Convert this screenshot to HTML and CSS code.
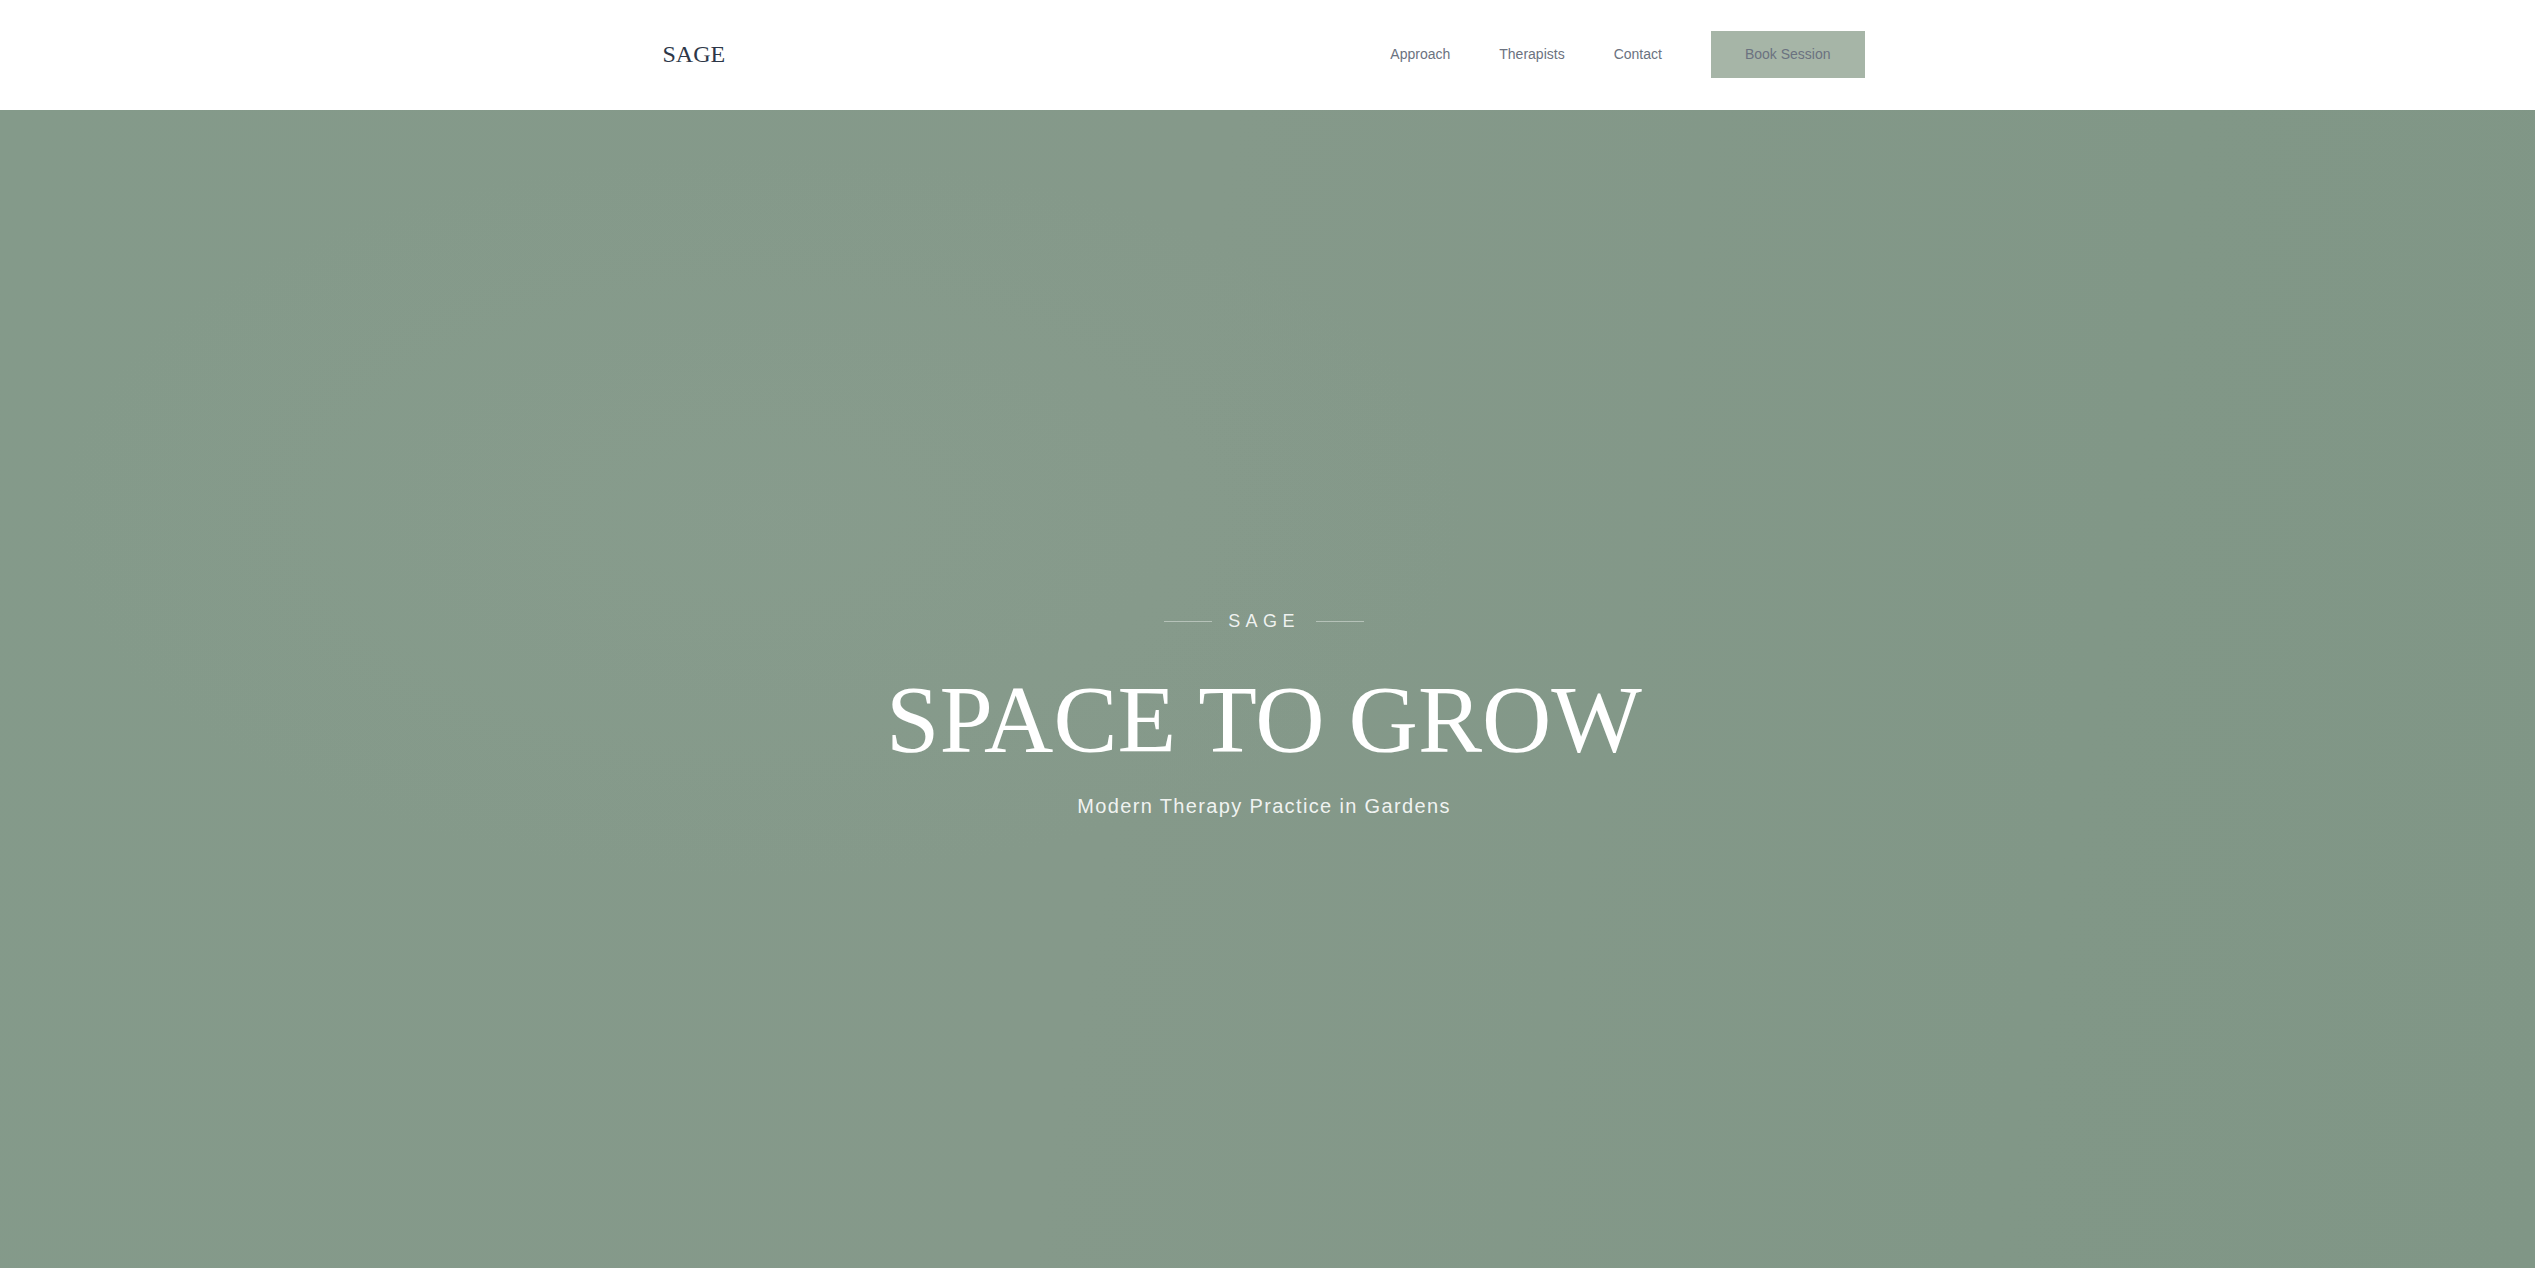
FILE: index.html
```html
<!DOCTYPE html>
<html lang="en">
<head>
<meta charset="utf-8">
<title>Sage — Space to Grow</title>
<link rel="stylesheet" href="styles.css">
</head>
<body>
<header class="site-header">
  <div class="header-inner">
    <a class="logo" href="#">SAGE</a>
    <nav class="nav">
      <a class="nav-link" href="#">Approach</a>
      <a class="nav-link" href="#">Therapists</a>
      <a class="nav-link" href="#">Contact</a>
      <a class="btn-book" href="#">Book Session</a>
    </nav>
  </div>
</header>
<section class="hero">
  <div class="eyebrow">
    <span class="eyebrow-line"></span>
    <span class="eyebrow-text">SAGE</span>
    <span class="eyebrow-line"></span>
  </div>
  <h1 class="hero-title">SPACE TO GROW</h1>
  <p class="hero-sub">Modern Therapy Practice in Gardens</p>
</section>
</body>
</html>
```
FILE: styles.css
```css
* { box-sizing: border-box; }
html, body { margin: 0; padding: 0; }
body {
  font-family: "Liberation Sans", Arial, sans-serif;
  background: #ffffff;
  overflow: hidden;
}
a { text-decoration: none; }

.site-header {
  height: 110px;
  background: #ffffff;
  padding-right: 7px;
  padding-bottom: 2px;
}
.header-inner {
  max-width: 1201px;
  height: 100%;
  margin: 0 auto;
  display: flex;
  align-items: center;
  justify-content: space-between;
}
.logo {
  font-family: "Liberation Serif", "Times New Roman", serif;
  font-size: 24px;
  line-height: 1;
  color: #2d3748;
  margin-left: -1px;
  margin-top: -1px;
}
.nav {
  display: flex;
  align-items: center;
  gap: 49px;
}
.nav-link {
  font-size: 14px;
  line-height: 20px;
  color: #6b7280;
}
.btn-book {
  display: block;
  font-size: 14px;
  line-height: 19px;
  padding: 14px 34px;
  background: #a6b5a7;
  color: #6b7280;
}

.hero {
  min-height: 1158px;
  padding-top: 53px;
  padding-right: 7px;
  display: flex;
  flex-direction: column;
  align-items: center;
  justify-content: center;
  background:
    radial-gradient(ellipse 40% 45% at 30% 35%, rgba(140,160,145,0.35), rgba(140,160,145,0) 70%),
    linear-gradient(100deg, #849a8a 0%, #85998a 45%, #819787 80%, #809686 100%);
  color: #ffffff;
  text-align: center;
}
.eyebrow {
  display: flex;
  align-items: center;
  gap: 16px;
  height: 18px;
  margin-bottom: 42px;
}
.eyebrow-line {
  display: block;
  width: 48px;
  height: 1px;
  background: rgba(255,255,255,0.4);
  margin-top: 2px;
}
.eyebrow-text {
  font-size: 18px;
  line-height: 18px;
  letter-spacing: 0.3em;
  color: rgba(255,255,255,0.88);
}
.hero-title {
  margin: 0;
  font-family: "Liberation Serif", "Times New Roman", serif;
  font-weight: 400;
  font-size: 96px;
  line-height: 96px;
  color: #ffffff;
}
.hero-sub {
  margin: 24px 0 0;
  font-size: 20px;
  line-height: 28px;
  letter-spacing: 1.35px;
  color: rgba(255,255,255,0.9);
}
```
